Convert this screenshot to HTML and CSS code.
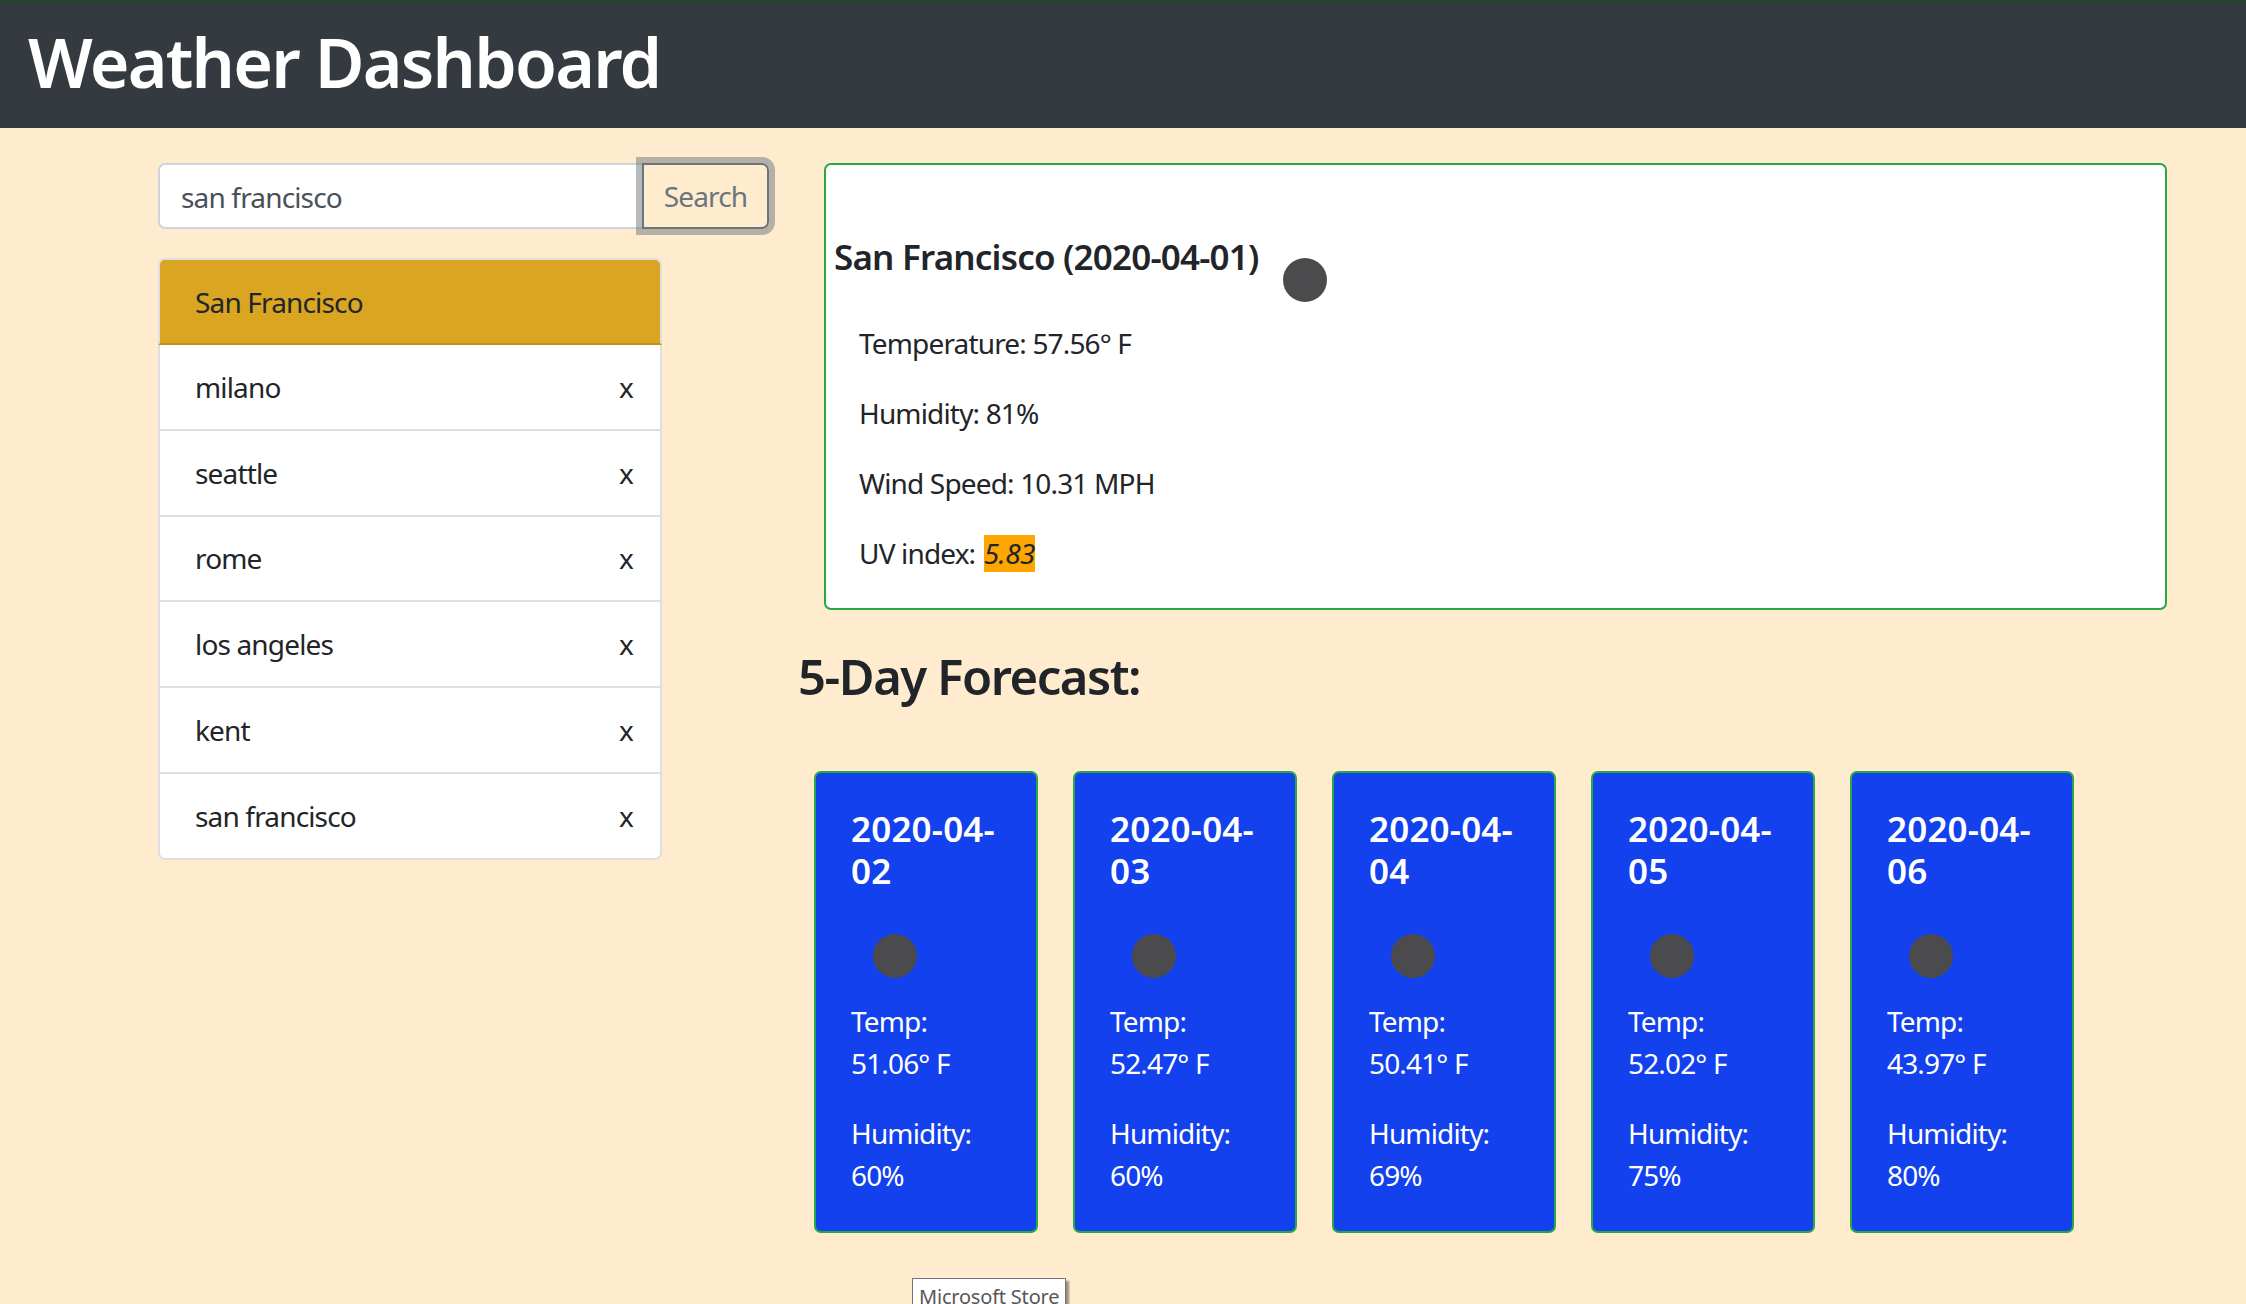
FILE: index.html
```html
<!DOCTYPE html>
<html lang="en">
<head>
    <meta charset="UTF-8">
    <meta name="viewport" content="width=device-width, initial-scale=1.0">
    <title>Weather Dashboard</title>
    <link rel="stylesheet" href="styles.css">
</head>
<body>
    <header class="site-header">
        <h1>Weather Dashboard</h1>
    </header>

    <main class="layout">
        <section class="sidebar">
            <form class="search-form">
                <input type="text" class="search-input" value="san francisco">
                <button type="button" class="search-btn">Search</button>
            </form>
            <ul class="city-list">
                <li class="city-item active"><span>San Francisco</span></li>
                <li class="city-item"><span>milano</span><span>x</span></li>
                <li class="city-item"><span>seattle</span><span>x</span></li>
                <li class="city-item"><span>rome</span><span>x</span></li>
                <li class="city-item"><span>los angeles</span><span>x</span></li>
                <li class="city-item"><span>kent</span><span>x</span></li>
                <li class="city-item"><span>san francisco</span><span>x</span></li>
            </ul>
        </section>

        <section class="content">
            <div class="today-card">
                <div class="today-title">
                    <h5>San Francisco (2020-04-01)</h5>
                    <div class="today-icon"></div>
                </div>
                <p>Temperature: 57.56° F</p>
                <p>Humidity: 81%</p>
                <p>Wind Speed: 10.31 MPH</p>
                <p>UV index: <em class="uv-value">5.83</em></p>
            </div>

            <h3 class="forecast-heading">5-Day Forecast:</h3>

            <div class="forecast-row">
                <div class="forecast-card">
                    <h5>2020-04-02</h5>
                    <div class="forecast-icon"></div>
                    <p>Temp: 51.06° F</p>
                    <p>Humidity: 60%</p>
                </div>
                <div class="forecast-card">
                    <h5>2020-04-03</h5>
                    <div class="forecast-icon"></div>
                    <p>Temp: 52.47° F</p>
                    <p>Humidity: 60%</p>
                </div>
                <div class="forecast-card">
                    <h5>2020-04-04</h5>
                    <div class="forecast-icon"></div>
                    <p>Temp: 50.41° F</p>
                    <p>Humidity: 69%</p>
                </div>
                <div class="forecast-card">
                    <h5>2020-04-05</h5>
                    <div class="forecast-icon"></div>
                    <p>Temp: 52.02° F</p>
                    <p>Humidity: 75%</p>
                </div>
                <div class="forecast-card">
                    <h5>2020-04-06</h5>
                    <div class="forecast-icon"></div>
                    <p>Temp: 43.97° F</p>
                    <p>Humidity: 80%</p>
                </div>
            </div>
        </section>
    </main>

    <div class="store-tooltip">Microsoft Store</div>
</body>
</html>
```

FILE: styles.css
```css
html, body {
    height: 100%;
}

body {
    margin: 0;
    overflow: hidden;
    position: relative;
    background-color: #ffebcd;
    color: #212529;
    font-family: "Noto Sans", sans-serif;
    font-size: 28px;
    line-height: 42px;
    letter-spacing: -0.03em;
}

h1, h3, h5, p, ul {
    margin: 0;
    padding: 0;
}

.site-header {
    box-sizing: border-box;
    height: 128px;
    padding: 0 28px 7px;
    display: flex;
    align-items: center;
    background-color: #343a40;
    border-top: 2px solid #1c4a23;
    color: #fff;
}

.site-header h1 {
    font-size: 68px;
    line-height: 84px;
    font-weight: 600;
    letter-spacing: -0.026em;
}

.layout {
    display: flex;
    padding: 29px 0 0 158px;
    gap: 29px;
}

.sidebar {
    width: 611px;
    padding-top: 6px;
}

.search-form {
    display: flex;
    height: 66px;
}

.search-input {
    flex: 1;
    min-width: 0;
    box-sizing: border-box;
    padding: 2px 21px 0;
    background: #fff;
    border: 2px solid #ced4da;
    border-right: 0;
    border-radius: 7px 0 0 7px;
    color: #495057;
    font: inherit;
    letter-spacing: inherit;
    outline: none;
}

.search-btn {
    width: 127px;
    padding: 0;
    background: transparent;
    border: 2px solid #6c757d;
    border-radius: 0 7px 7px 0;
    box-shadow: 0 0 0 6px rgba(108, 117, 125, 0.5);
    color: #6c757d;
    font: inherit;
    letter-spacing: inherit;
}

.city-list {
    list-style: none;
    width: 504px;
    margin-top: 29px;
}

.city-item {
    box-sizing: border-box;
    height: 85.75px;
    padding: 0 27px 0 35px;
    display: flex;
    align-items: center;
    justify-content: space-between;
    background-color: #fff;
    border: 2px solid #dfdfdf;
    border-top: 0;
}

.city-item:last-child {
    border-radius: 0 0 7px 7px;
}

.city-item.active {
    height: 87px;
    background-color: #daa520;
    border-color: #dfdfdf;
    border-bottom-color: #bf9118;
    border-top: 2px solid #dfdfdf;
    border-radius: 7px 7px 0 0;
}

.content {
    width: 1369px;
}

.today-card {
    box-sizing: border-box;
    width: 1343px;
    height: 447px;
    margin: 6px 0 0 26px;
    padding: 71px 8px 0;
    background-color: #fff;
    border: 2px solid #28a745;
    border-radius: 7px;
}

.today-title {
    display: flex;
    align-items: flex-start;
    gap: 24px;
}

.today-title h5 {
    font-size: 35px;
    line-height: 42px;
    font-weight: 600;
    letter-spacing: -0.023em;
}

.today-icon {
    width: 44px;
    height: 44px;
    margin-top: 22px;
    border-radius: 50%;
    background-color: #4b4b4d;
}

.today-card p {
    margin: 0 0 28px 25px;
}

.today-title + p {
    margin-top: 20px;
}

.uv-value {
    display: inline-block;
    margin-left: 2px;
    line-height: 37px;
    letter-spacing: -0.02em;
    background-color: #ffa500;
}

.forecast-heading {
    margin-top: 37px;
    font-size: 49px;
    line-height: 59px;
    font-weight: 600;
    letter-spacing: -0.03em;
}

.forecast-row {
    display: flex;
    gap: 35px;
    margin: 65px 0 0 16px;
}

.forecast-card {
    box-sizing: border-box;
    width: 224px;
    height: 462px;
    padding: 35px 35px 0;
    background-color: #1241ed;
    border: 2px solid #28a745;
    border-radius: 7px;
    color: #fff;
}

.forecast-card h5 {
    font-size: 35px;
    line-height: 42px;
    font-weight: 600;
    letter-spacing: 0.005em;
}

.forecast-icon {
    width: 44px;
    height: 44px;
    margin: 42px 0 22px 22px;
    border-radius: 50%;
    background-color: #4b4b4d;
}

.forecast-card p {
    margin-bottom: 28px;
}

.store-tooltip {
    position: absolute;
    left: 912px;
    top: 1278px;
    padding: 0 6px;
    background-color: #fff;
    border: 1px solid #767676;
    box-shadow: 3px 3px 2px rgba(0, 0, 0, 0.4);
    color: #575757;
    font-size: 20px;
    line-height: 36px;
    letter-spacing: -0.01em;
}
```
